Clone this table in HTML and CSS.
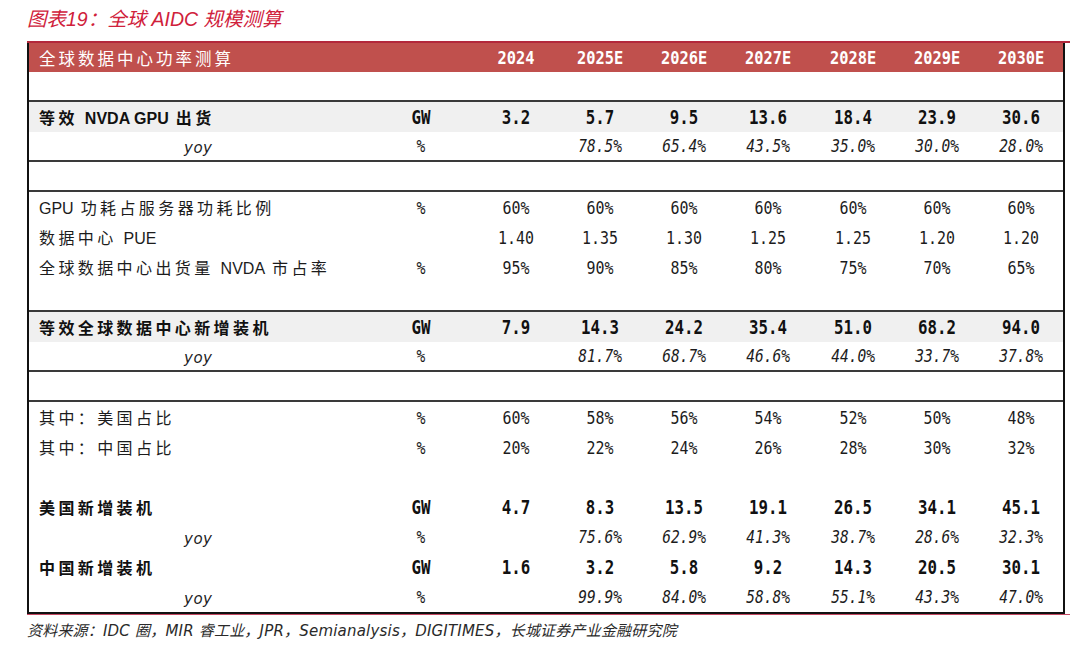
FILE: index.html
```html
<!DOCTYPE html>
<html lang="zh-CN">
<head>
<meta charset="utf-8">
<title>全球 AIDC 规模测算</title>
<link rel="stylesheet" href="styles.css">
</head>
<body>
<h1 class="title">图表19：全球 AIDC 规模测算</h1>
<div class="sheet">
  <div class="grid">
    <div class="row head">
      <div class="l">全球数据中心功率测算</div><div class="c"></div>
      <div class="c">2024</div><div class="c">2025E</div><div class="c">2026E</div><div class="c">2027E</div><div class="c">2028E</div><div class="c">2029E</div><div class="c">2030E</div>
    </div>
    <div class="row rule"></div>
    <div class="row bold shade">
      <div class="l">等效 <span class="en">NVDA GPU</span> 出货</div><div class="c">GW</div>
      <div class="c">3.2</div><div class="c">5.7</div><div class="c">9.5</div><div class="c">13.6</div><div class="c">18.4</div><div class="c">23.9</div><div class="c">30.6</div>
    </div>
    <div class="row yoy rule">
      <div class="l"><span class="yy">yoy</span></div><div class="c">%</div>
      <div class="c"></div><div class="c">78.5%</div><div class="c">65.4%</div><div class="c">43.5%</div><div class="c">35.0%</div><div class="c">30.0%</div><div class="c">28.0%</div>
    </div>
    <div class="row rule"></div>
    <div class="row">
      <div class="l"><span class="en">GPU</span> 功耗占服务器功耗比例</div><div class="c">%</div>
      <div class="c">60%</div><div class="c">60%</div><div class="c">60%</div><div class="c">60%</div><div class="c">60%</div><div class="c">60%</div><div class="c">60%</div>
    </div>
    <div class="row">
      <div class="l">数据中心 <span class="en">PUE</span></div><div class="c"></div>
      <div class="c">1.40</div><div class="c">1.35</div><div class="c">1.30</div><div class="c">1.25</div><div class="c">1.25</div><div class="c">1.20</div><div class="c">1.20</div>
    </div>
    <div class="row">
      <div class="l">全球数据中心出货量 <span class="en">NVDA</span> 市占率</div><div class="c">%</div>
      <div class="c">95%</div><div class="c">90%</div><div class="c">85%</div><div class="c">80%</div><div class="c">75%</div><div class="c">70%</div><div class="c">65%</div>
    </div>
    <div class="row rule"></div>
    <div class="row bold shade">
      <div class="l">等效全球数据中心新增装机</div><div class="c">GW</div>
      <div class="c">7.9</div><div class="c">14.3</div><div class="c">24.2</div><div class="c">35.4</div><div class="c">51.0</div><div class="c">68.2</div><div class="c">94.0</div>
    </div>
    <div class="row yoy rule">
      <div class="l"><span class="yy">yoy</span></div><div class="c">%</div>
      <div class="c"></div><div class="c">81.7%</div><div class="c">68.7%</div><div class="c">46.6%</div><div class="c">44.0%</div><div class="c">33.7%</div><div class="c">37.8%</div>
    </div>
    <div class="row rule"></div>
    <div class="row">
      <div class="l">其中：美国占比</div><div class="c">%</div>
      <div class="c">60%</div><div class="c">58%</div><div class="c">56%</div><div class="c">54%</div><div class="c">52%</div><div class="c">50%</div><div class="c">48%</div>
    </div>
    <div class="row">
      <div class="l">其中：中国占比</div><div class="c">%</div>
      <div class="c">20%</div><div class="c">22%</div><div class="c">24%</div><div class="c">26%</div><div class="c">28%</div><div class="c">30%</div><div class="c">32%</div>
    </div>
    <div class="row"></div>
    <div class="row bold">
      <div class="l">美国新增装机</div><div class="c">GW</div>
      <div class="c">4.7</div><div class="c">8.3</div><div class="c">13.5</div><div class="c">19.1</div><div class="c">26.5</div><div class="c">34.1</div><div class="c">45.1</div>
    </div>
    <div class="row yoy">
      <div class="l"><span class="yy">yoy</span></div><div class="c">%</div>
      <div class="c"></div><div class="c">75.6%</div><div class="c">62.9%</div><div class="c">41.3%</div><div class="c">38.7%</div><div class="c">28.6%</div><div class="c">32.3%</div>
    </div>
    <div class="row bold">
      <div class="l">中国新增装机</div><div class="c">GW</div>
      <div class="c">1.6</div><div class="c">3.2</div><div class="c">5.8</div><div class="c">9.2</div><div class="c">14.3</div><div class="c">20.5</div><div class="c">30.1</div>
    </div>
    <div class="row yoy">
      <div class="l"><span class="yy">yoy</span></div><div class="c">%</div>
      <div class="c"></div><div class="c">99.9%</div><div class="c">84.0%</div><div class="c">58.8%</div><div class="c">55.1%</div><div class="c">43.3%</div><div class="c">47.0%</div>
    </div>
  </div>
</div>
<p class="source">资料来源：IDC 圈，MIR 睿工业，JPR，Semianalysis，DIGITIMES，长城证券产业金融研究院</p>
</body>
</html>
```
FILE: styles.css
```css
body {
  margin: 0;
  background: #fff;
  color: #1c1c1c;
  font-family: "Noto Sans CJK SC", sans-serif;
}

.title {
  margin: 0;
  height: 41px;
  box-sizing: border-box;
  padding: 7px 0 0 27px;
  font: italic 400 19.5px/24px "Liberation Sans", "Noto Sans CJK SC", sans-serif;
  color: #d0213b;
}

.sheet {
  margin-left: 27px;
  width: 1043px;
  border-top: 2px solid #b3283b;
  border-bottom: 1px solid #c44862;
}

.grid {
  width: 1038px;
  box-sizing: border-box;
  border: 2px solid #111;
  border-top: 0;
}

.row {
  display: grid;
  grid-template-columns: 339px 106px repeat(7, 1fr);
  align-items: center;
  height: 30px;
  box-sizing: border-box;
}

.head {
  height: 29px;
  background: #c0504d;
  color: #fff;
}

.rule {
  border-bottom: 2px solid #3a3a3a;
}

.shade {
  background: #f0f0f0;
}

.bold {
  font-weight: 700;
  color: #111;
}

/* label column */
.l {
  padding-left: 10px;
  white-space: nowrap;
  letter-spacing: 3.4px;
  font-size: 16px;
}

.head .l {
  font-size: 16.5px;
  letter-spacing: 3px;
}

.en {
  font-family: "Liberation Sans", sans-serif;
  letter-spacing: 0;
  font-size: 16px;
}

.yy {
  display: inline-block;
  padding-left: 145px;
  font: italic 400 15px "DejaVu Sans", sans-serif;
  letter-spacing: 0.5px;
}

/* numeric and unit columns: narrow monospaced digits */
.c {
  text-align: center;
  white-space: nowrap;
  font-family: "DejaVu Sans Mono", monospace;
  font-size: 18px;
  transform: scaleX(0.83);
}

.head .c {
  font-weight: 700;
  font-size: 18.5px;
}

.bold .c {
  font-size: 19px;
}

.yoy .c {
  font-style: italic;
  font-size: 17.5px;
}

.source {
  margin: 6px 0 0 27px;
  font: italic 400 15px/20px "DejaVu Sans", "Noto Sans CJK SC", sans-serif;
  letter-spacing: 0.2px;
  color: #2a2a2a;
}
```
